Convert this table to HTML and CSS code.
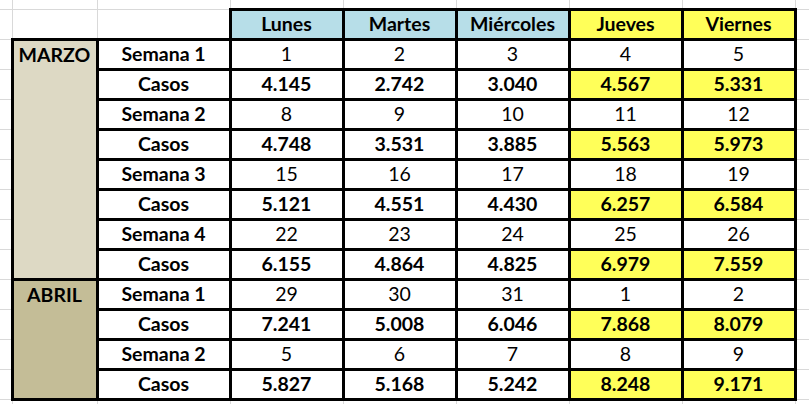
FILE: index.html
```html
<!DOCTYPE html>
<html lang="es">
<head>
<meta charset="utf-8">
<title>Casos por semana</title>
<link rel="stylesheet" href="styles.css">
</head>
<body>
<table class="sheet">
  <colgroup>
    <col class="c-margin">
    <col class="c-month">
    <col class="c-week">
    <col class="c-day"><col class="c-day"><col class="c-day"><col class="c-day"><col class="c-day">
    <col class="c-right">
  </colgroup>
  <tr class="r-top">
    <td></td><td></td><td></td><td></td><td></td><td></td><td></td><td></td><td></td>
  </tr>
  <tr class="r-row">
    <td></td><td></td><td></td>
    <td class="cell hdr blue">Lunes</td>
    <td class="cell hdr blue">Martes</td>
    <td class="cell hdr blue">Miércoles</td>
    <td class="cell hdr yellow">Jueves</td>
    <td class="cell hdr yellow">Viernes</td>
    <td></td>
  </tr>
  <tr class="r-row">
    <td></td>
    <td class="cell month marzo" rowspan="8">MARZO</td>
    <td class="cell lbl">Semana 1</td>
    <td class="cell">1</td><td class="cell">2</td><td class="cell">3</td><td class="cell">4</td><td class="cell">5</td>
    <td></td>
  </tr>
  <tr class="r-row">
    <td></td>
    <td class="cell lbl">Casos</td>
    <td class="cell b">4.145</td><td class="cell b">2.742</td><td class="cell b">3.040</td><td class="cell b yellow">4.567</td><td class="cell b yellow">5.331</td>
    <td></td>
  </tr>
  <tr class="r-row">
    <td></td>
    <td class="cell lbl">Semana 2</td>
    <td class="cell">8</td><td class="cell">9</td><td class="cell">10</td><td class="cell">11</td><td class="cell">12</td>
    <td></td>
  </tr>
  <tr class="r-row">
    <td></td>
    <td class="cell lbl">Casos</td>
    <td class="cell b">4.748</td><td class="cell b">3.531</td><td class="cell b">3.885</td><td class="cell b yellow">5.563</td><td class="cell b yellow">5.973</td>
    <td></td>
  </tr>
  <tr class="r-row">
    <td></td>
    <td class="cell lbl">Semana 3</td>
    <td class="cell">15</td><td class="cell">16</td><td class="cell">17</td><td class="cell">18</td><td class="cell">19</td>
    <td></td>
  </tr>
  <tr class="r-row">
    <td></td>
    <td class="cell lbl">Casos</td>
    <td class="cell b">5.121</td><td class="cell b">4.551</td><td class="cell b">4.430</td><td class="cell b yellow">6.257</td><td class="cell b yellow">6.584</td>
    <td></td>
  </tr>
  <tr class="r-row">
    <td></td>
    <td class="cell lbl">Semana 4</td>
    <td class="cell">22</td><td class="cell">23</td><td class="cell">24</td><td class="cell">25</td><td class="cell">26</td>
    <td></td>
  </tr>
  <tr class="r-row">
    <td></td>
    <td class="cell lbl">Casos</td>
    <td class="cell b">6.155</td><td class="cell b">4.864</td><td class="cell b">4.825</td><td class="cell b yellow">6.979</td><td class="cell b yellow">7.559</td>
    <td></td>
  </tr>
  <tr class="r-row">
    <td></td>
    <td class="cell month abril" rowspan="4">ABRIL</td>
    <td class="cell lbl">Semana 1</td>
    <td class="cell">29</td><td class="cell">30</td><td class="cell">31</td><td class="cell">1</td><td class="cell">2</td>
    <td></td>
  </tr>
  <tr class="r-row">
    <td></td>
    <td class="cell lbl">Casos</td>
    <td class="cell b">7.241</td><td class="cell b">5.008</td><td class="cell b">6.046</td><td class="cell b yellow">7.868</td><td class="cell b yellow">8.079</td>
    <td></td>
  </tr>
  <tr class="r-row">
    <td></td>
    <td class="cell lbl">Semana 2</td>
    <td class="cell">5</td><td class="cell">6</td><td class="cell">7</td><td class="cell">8</td><td class="cell">9</td>
    <td></td>
  </tr>
  <tr class="r-row">
    <td></td>
    <td class="cell lbl">Casos</td>
    <td class="cell b">5.827</td><td class="cell b">5.168</td><td class="cell b">5.242</td><td class="cell b yellow">8.248</td><td class="cell b yellow">9.171</td>
    <td></td>
  </tr>
  <tr class="r-bottom">
    <td></td><td></td><td></td><td></td><td></td><td></td><td></td><td></td><td></td>
  </tr>
</table>
</body>
</html>
```

FILE: styles.css
```css
html, body {
  margin: 0;
  padding: 0;
  background: #ffffff;
  overflow: hidden;
}

.sheet {
  border-collapse: collapse;
  table-layout: fixed;
  width: 809px;
  font-family: Lato, "Open Sans", sans-serif;
  font-size: 19.5px;
  color: #000;
}

.c-margin { width: 12px; }
.c-month { width: 85px; }
.c-week { width: 133px; }
.c-day { width: 113px; }
.c-right { width: 14px; }

.sheet td {
  border: 1px solid #d9d9d9;
  padding: 0;
  text-align: center;
  vertical-align: middle;
  line-height: 26px;
  white-space: nowrap;
  overflow: hidden;
}

.r-top { height: 9px; }
.r-row { height: 30px; }
.r-bottom { height: 6px; }

.r-top td { border-top: 0; }
.r-bottom td { border-bottom: 0; }
.sheet td:first-child { border-left: 0; }
.sheet td:last-child { border-right: 0; }

.sheet td.cell {
  border: 3px solid #000;
  background: #fff;
}

.hdr { font-weight: 700; }
.lbl { font-weight: 700; }
.b { font-weight: 700; }

.sheet td.blue { background: #b7dee8; }
.sheet td.yellow { background: #ffff59; }

.sheet td.month {
  font-weight: 700;
  vertical-align: top;
  padding-top: 1px;
}
.sheet td.marzo { background: #ddd9c4; }
.sheet td.abril { background: #c4bd97; }
```
